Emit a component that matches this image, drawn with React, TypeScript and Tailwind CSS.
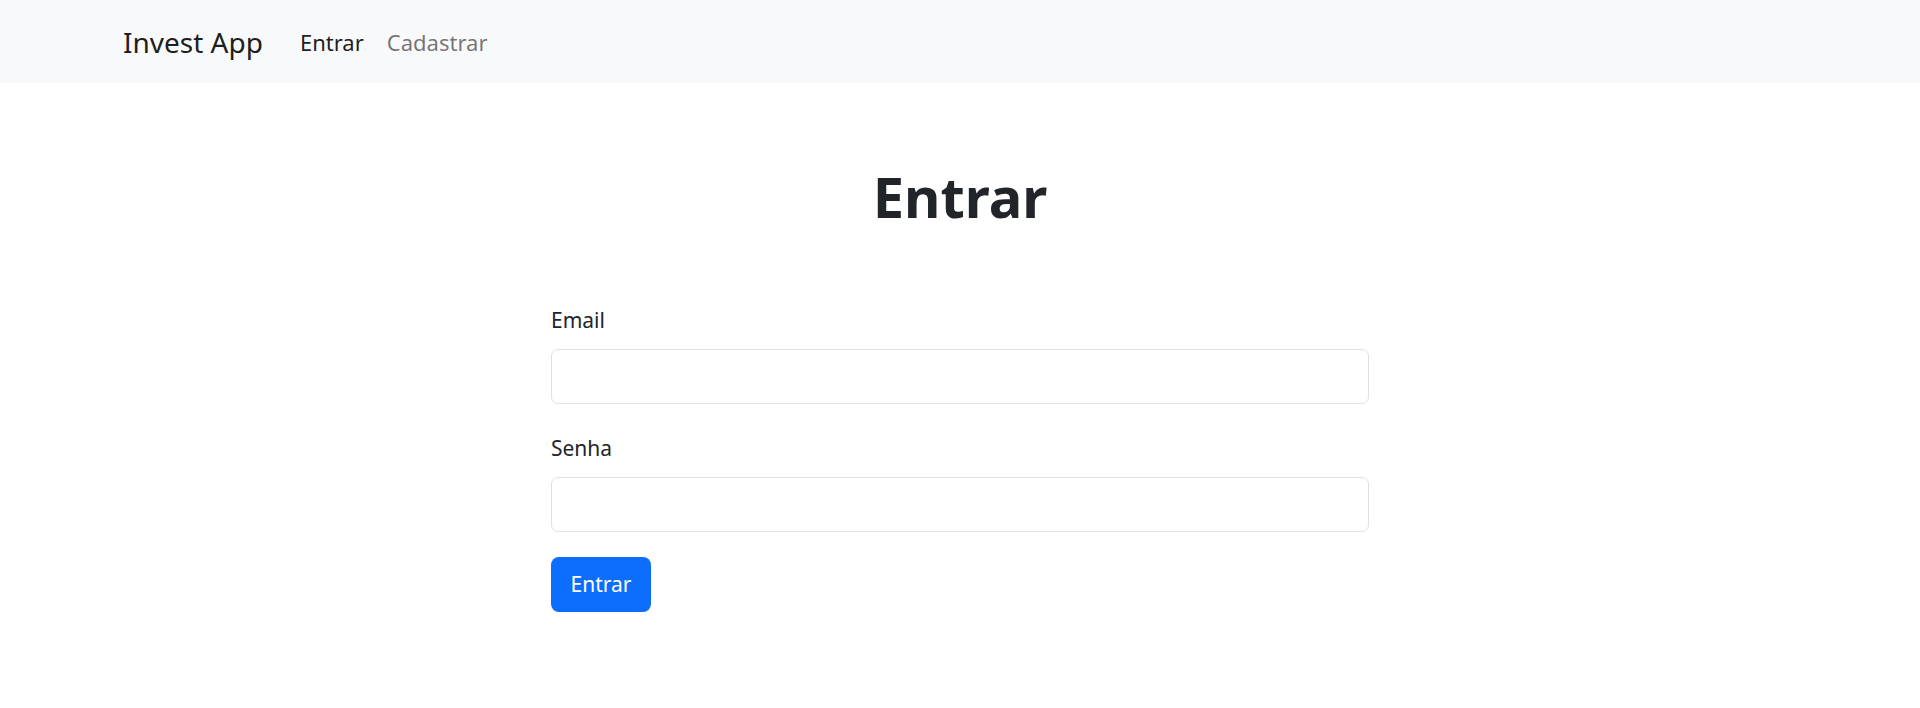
import React from 'react';

export default function App() {
  return (
    <div className="min-h-screen bg-white font-['Noto_Sans',sans-serif] text-[#212529]">
      <nav className="h-[83px] bg-[#f8f9fa] flex items-center pl-[123px]">
        <span className="text-[28px] leading-[38px] text-black/90 mr-[37px]">Invest App</span>
        <a href="#" className="text-[22px] leading-[32px] text-black/90">Entrar</a>
        <a href="#" className="ml-[23px] text-[22px] leading-[32px] text-black/55">Cadastrar</a>
      </nav>

      <main className="w-[818px] mx-auto pt-[77px]">
        <h1 className="text-center text-[56px] leading-[72px] font-bold">Entrar</h1>

        <form className="mt-[73px]" onSubmit={(e) => e.preventDefault()}>
          <div className="mb-[29px]">
            <label className="block text-[21px] leading-[30px] mb-[14px]">Email</label>
            <input
              type="email"
              className="block w-full h-[55px] px-4 text-[21px] border border-[#dee2e6] rounded-[7px] outline-none"
            />
          </div>
          <div className="mb-[25px]">
            <label className="block text-[21px] leading-[30px] mb-[14px]">Senha</label>
            <input
              type="password"
              className="block w-full h-[55px] px-4 text-[21px] border border-[#dee2e6] rounded-[7px] outline-none"
            />
          </div>
          <button
            type="submit"
            className="w-[100px] h-[55px] bg-[#0d6efd] text-white text-[21px] rounded-[8px]"
          >
            Entrar
          </button>
        </form>
      </main>
    </div>
  );
}
